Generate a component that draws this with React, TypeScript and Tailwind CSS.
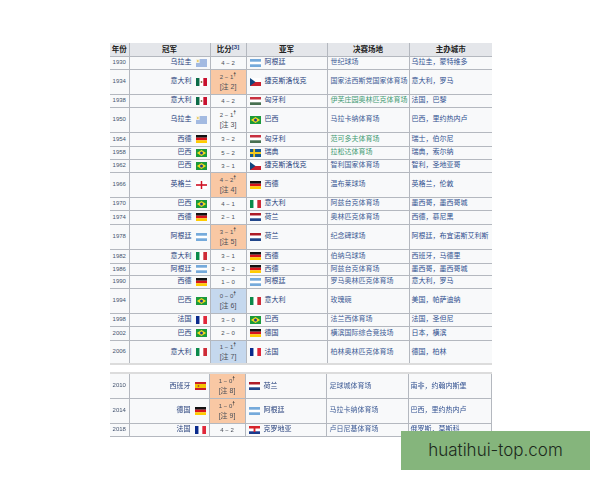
import type { ReactNode } from "react"

const Flag = ({ children }: { children: ReactNode }) => (
  <svg viewBox="0 0 12 8" className="w-[11px] h-[8px] shrink-0 inline-block" preserveAspectRatio="none">
    {children}
  </svg>
)

const flags: Record<string, ReactNode> = {
  uy: (
    <>
      <rect width="12" height="8" fill="#fff" />
      <path d="M0 1h12M0 3h12M0 5h12M0 7h12" stroke="#3f6fc0" strokeWidth="1" />
      <rect width="4" height="4" fill="#f4f1e0" />
      <circle cx="2" cy="2" r="1" fill="#e8c65a" />
    </>
  ),
  ar: (
    <>
      <rect width="12" height="8" fill="#fff" />
      <rect width="12" height="2.7" fill="#75aadb" />
      <rect y="5.3" width="12" height="2.7" fill="#75aadb" />
    </>
  ),
  mx: (
    <>
      <rect width="4" height="8" fill="#0b6b47" />
      <rect x="4" width="4" height="8" fill="#fff" />
      <rect x="8" width="4" height="8" fill="#c8102e" />
      <circle cx="6" cy="4" r="1" fill="#8c6a3c" />
    </>
  ),
  cz: (
    <>
      <rect width="12" height="4" fill="#fff" />
      <rect y="4" width="12" height="4" fill="#c8202f" />
      <path d="M0 0L6 4L0 8Z" fill="#11457e" />
    </>
  ),
  hu: (
    <>
      <rect width="12" height="2.7" fill="#c8303f" />
      <rect y="2.7" width="12" height="2.6" fill="#fff" />
      <rect y="5.3" width="12" height="2.7" fill="#477050" />
    </>
  ),
  br: (
    <>
      <rect width="12" height="8" fill="#1a9a3c" />
      <path d="M6 1L11 4L6 7L1 4Z" fill="#f4d91c" />
      <circle cx="6" cy="4" r="1.6" fill="#1d3f8f" />
    </>
  ),
  de: (
    <>
      <rect width="12" height="2.7" fill="#111" />
      <rect y="2.7" width="12" height="2.6" fill="#d8141c" />
      <rect y="5.3" width="12" height="2.7" fill="#fc0" />
    </>
  ),
  se: (
    <>
      <rect width="12" height="8" fill="#18598f" />
      <rect x="3.5" width="2" height="8" fill="#f2c81e" />
      <rect y="3" width="12" height="2" fill="#f2c81e" />
    </>
  ),
  en: (
    <>
      <rect width="12" height="8" fill="#fff" />
      <rect x="5.2" width="1.6" height="8" fill="#ce1124" />
      <rect y="3.2" width="12" height="1.6" fill="#ce1124" />
    </>
  ),
  it: (
    <>
      <rect width="4" height="8" fill="#0b8a4a" />
      <rect x="4" width="4" height="8" fill="#fff" />
      <rect x="8" width="4" height="8" fill="#ce2b37" />
    </>
  ),
  nl: (
    <>
      <rect width="12" height="2.7" fill="#ae1c28" />
      <rect y="2.7" width="12" height="2.6" fill="#fff" />
      <rect y="5.3" width="12" height="2.7" fill="#21468b" />
    </>
  ),
  fr: (
    <>
      <rect width="4" height="8" fill="#0a2a8c" />
      <rect x="4" width="4" height="8" fill="#fff" />
      <rect x="8" width="4" height="8" fill="#e0283a" />
    </>
  ),
  es: (
    <>
      <rect width="12" height="8" fill="#c8202a" />
      <rect y="2" width="12" height="4" fill="#f5c400" />
      <rect x="3" y="3" width="1.6" height="2" fill="#b5522a" />
    </>
  ),
  hr: (
    <>
      <rect width="12" height="2.7" fill="#d8242c" />
      <rect y="2.7" width="12" height="2.6" fill="#fff" />
      <rect y="5.3" width="12" height="2.7" fill="#1a3a8c" />
      <rect x="5" y="2" width="2" height="4" fill="#d8242c" />
    </>
  ),
}

type Row = {
  year: string
  win: string
  winFlag: string
  score: string
  note?: string
  tone?: "orange" | "blue"
  lose: string
  loseFlag: string
  venue: string
  green?: boolean
  city: string
  h: string
}

const upper: Row[] = [
  { year: "1930", win: "乌拉圭", winFlag: "uy", score: "4 − 2", lose: "阿根廷", loseFlag: "ar", venue: "世纪球场", city: "乌拉圭，蒙特维多", h: "h-[13px]" },
  { year: "1934", win: "意大利", winFlag: "mx", score: "2 − 1", note: "[注 2]", tone: "orange", lose: "捷克斯洛伐克", loseFlag: "cz", venue: "国家法西斯党国家体育场", city: "意大利，罗马", h: "h-[25px]" },
  { year: "1938", win: "意大利", winFlag: "mx", score: "4 − 2", lose: "匈牙利", loseFlag: "hu", venue: "伊芙庄园奥林匹克体育场", green: true, city: "法国，巴黎", h: "h-[13px]" },
  { year: "1950", win: "乌拉圭", winFlag: "uy", score: "2 − 1", note: "[注 3]", lose: "巴西", loseFlag: "br", venue: "马拉卡纳体育场", city: "巴西，里约热内卢", h: "h-[25px]" },
  { year: "1954", win: "西德", winFlag: "de", score: "3 − 2", lose: "匈牙利", loseFlag: "hu", venue: "范可多夫体育场", green: true, city: "瑞士，伯尔尼", h: "h-[14px]" },
  { year: "1958", win: "巴西", winFlag: "br", score: "5 − 2", lose: "瑞典", loseFlag: "se", venue: "拉松达体育场", green: true, city: "瑞典，索尔纳", h: "h-[13px]" },
  { year: "1962", win: "巴西", winFlag: "br", score: "3 − 1", lose: "捷克斯洛伐克", loseFlag: "cz", venue: "智利国家体育场", city: "智利，圣地亚哥", h: "h-[13px]" },
  { year: "1966", win: "英格兰", winFlag: "en", score: "4 − 2", note: "[注 4]", tone: "orange", lose: "西德", loseFlag: "de", venue: "温布莱球场", city: "英格兰，伦敦", h: "h-[25px]" },
  { year: "1970", win: "巴西", winFlag: "br", score: "4 − 1", lose: "意大利", loseFlag: "it", venue: "阿兹台克体育场", city: "墨西哥，墨西哥城", h: "h-[13px]" },
  { year: "1974", win: "西德", winFlag: "de", score: "2 − 1", lose: "荷兰", loseFlag: "nl", venue: "奥林匹克体育场", city: "西德，慕尼黑", h: "h-[14px]" },
  { year: "1978", win: "阿根廷", winFlag: "ar", score: "3 − 1", note: "[注 5]", tone: "orange", lose: "荷兰", loseFlag: "nl", venue: "纪念碑球场", city: "阿根廷，布宜诺斯艾利斯", h: "h-[25px]" },
  { year: "1982", win: "意大利", winFlag: "it", score: "3 − 1", lose: "西德", loseFlag: "de", venue: "伯纳乌球场", city: "西班牙，马德里", h: "h-[14px]" },
  { year: "1986", win: "阿根廷", winFlag: "ar", score: "3 − 2", lose: "西德", loseFlag: "de", venue: "阿兹台克体育场", city: "墨西哥，墨西哥城", h: "h-[12px]" },
  { year: "1990", win: "西德", winFlag: "de", score: "1 − 0", lose: "阿根廷", loseFlag: "ar", venue: "罗马奥林匹克体育场", city: "意大利，罗马", h: "h-[13px]" },
  { year: "1994", win: "巴西", winFlag: "br", score: "0 − 0", note: "[注 6]", tone: "blue", lose: "意大利", loseFlag: "it", venue: "玫瑰碗", city: "美国，帕萨迪纳", h: "h-[25px]" },
  { year: "1998", win: "法国", winFlag: "fr", score: "3 − 0", lose: "巴西", loseFlag: "br", venue: "法兰西体育场", city: "法国，圣但尼", h: "h-[13px]" },
  { year: "2002", win: "巴西", winFlag: "br", score: "2 − 0", lose: "德国", loseFlag: "de", venue: "横滨国际综合竞技场", city: "日本，横滨", h: "h-[14px]" },
  { year: "2006", win: "意大利", winFlag: "it", score: "1 − 1", note: "[注 7]", tone: "blue", lose: "法国", loseFlag: "fr", venue: "柏林奥林匹克体育场", city: "德国，柏林", h: "h-[24px]" },
]

const lower: Row[] = [
  { year: "2010", win: "西班牙", winFlag: "es", score: "1 − 0", note: "[注 8]", tone: "orange", lose: "荷兰", loseFlag: "nl", venue: "足球城体育场", city: "南非，约翰内斯堡", h: "h-[25px]" },
  { year: "2014", win: "德国", winFlag: "de", score: "1 − 0", note: "[注 9]", tone: "orange", lose: "阿根廷", loseFlag: "ar", venue: "马拉卡纳体育场", city: "巴西，里约热内卢", h: "h-[25px]" },
  { year: "2018", win: "法国", winFlag: "fr", score: "4 − 2", lose: "克罗地亚", loseFlag: "hr", venue: "卢日尼基体育场", city: "俄罗斯，莫斯科", h: "h-[13px]" },
]

const cell = "border-b border-r border-[#b4b8bf] p-0 align-middle whitespace-nowrap overflow-hidden"

function Rows({ rows }: { rows: Row[] }) {
  return (
    <>
      {rows.map((r) => (
        <tr key={r.year} className={r.h}>
          <td className={`${cell} text-center text-[#44546f] text-[6px]`}>{r.year}</td>
          <td className={`${cell} text-[#27417c]`}>
            <div className="flex items-center justify-end gap-[4px] pr-[3px]">
              <span>{r.win}</span>
              <Flag>{flags[r.winFlag]}</Flag>
            </div>
          </td>
          <td
            className={`${cell} text-center text-[#4a4f58] text-[6px] leading-[10px] ${
              r.tone === "orange" ? "bg-[#f9c8a4]" : r.tone === "blue" ? "bg-[#c5d8ee]" : ""
            }`}
          >
            <div>
              {r.score}
              {r.note && <sup className="text-[5px] font-bold text-[#333] leading-none">†</sup>}
            </div>
            {r.note && <div className="text-[7px]">{r.note}</div>}
          </td>
          <td className={`${cell} text-[#27417c]`}>
            <div className="flex items-center gap-[4px] pl-[3px]">
              <Flag>{flags[r.loseFlag]}</Flag>
              <span>{r.lose}</span>
            </div>
          </td>
          <td className={`${cell} pl-[3px] ${r.green ? "text-[#3f9a72]" : "text-[#3c5a94]"}`}>{r.venue}</td>
          <td className={`${cell} pl-[2px] text-[#2f4f8f]`}>{r.city}</td>
        </tr>
      ))}
    </>
  )
}

export default function App() {
  return (
    <div className="relative w-[600px] h-[480px] bg-white overflow-hidden font-['Liberation_Sans','Noto_Sans_CJK_SC',sans-serif]">
      <div className="pt-[43px] pl-[110px] flex flex-col gap-[7px] text-[7px] blur-[0.4px]">
        <table className="table-fixed border-collapse w-[382px] bg-[#f8f9fa] border-b-2 border-[#dcdcdc] [&_td:last-child]:border-r-0 [&_th:last-child]:border-r-0">
          <colgroup>
            <col className="w-[19px]" />
            <col className="w-[81px]" />
            <col className="w-[36px]" />
            <col className="w-[81px]" />
            <col className="w-[82px]" />
            <col className="w-[83px]" />
          </colgroup>
          <thead>
            <tr className="h-[13px] bg-[#e4e6ea] text-[#222] font-bold text-[7.5px]">
              <th className={cell}>年份</th>
              <th className={cell}>冠军</th>
              <th className={cell}>
                比分<sup className="text-[6px] text-[#27417c] leading-none">[3]</sup>
              </th>
              <th className={cell}>亚军</th>
              <th className={cell}>决赛场地</th>
              <th className={cell}>主办城市</th>
            </tr>
          </thead>
          <tbody>
            <Rows rows={upper} />
          </tbody>
        </table>
        <table className="table-fixed border-collapse w-[381px] bg-[#f8f9fa] border-t-2 border-[#dcdcdc]">
          <colgroup>
            <col className="w-[19px]" />
            <col className="w-[80px]" />
            <col className="w-[36px]" />
            <col className="w-[81px]" />
            <col className="w-[82px]" />
            <col className="w-[83px]" />
          </colgroup>
          <tbody>
            <Rows rows={lower} />
          </tbody>
        </table>
      </div>
      <div className="absolute left-[401px] top-[431px] w-[189px] h-[39px] bg-[#85b57c] flex items-center justify-center text-[17px] text-[#1c2a1c] font-['Inter',sans-serif] font-light">
        huatihui-top.com
      </div>
    </div>
  )
}
